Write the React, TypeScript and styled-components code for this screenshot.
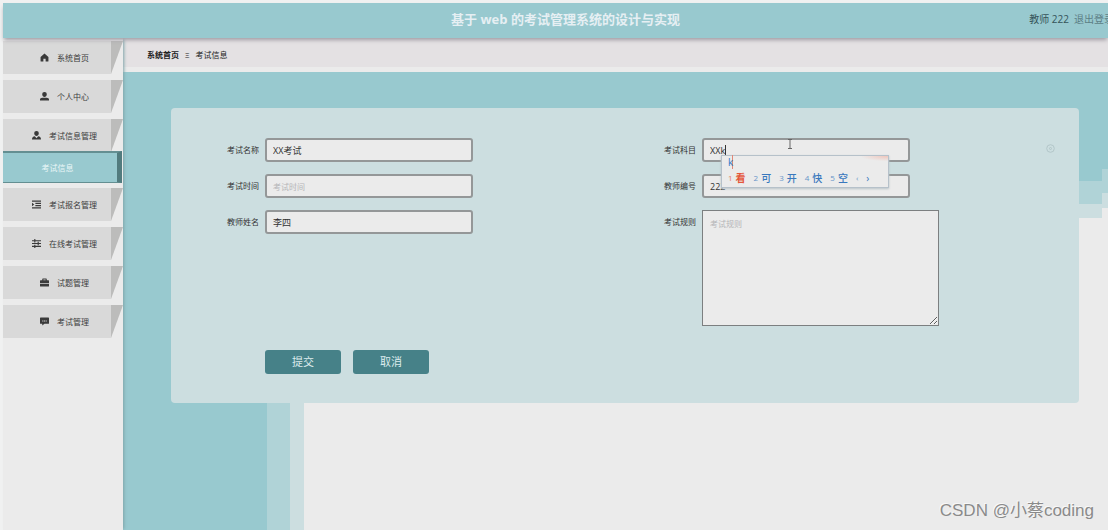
import React from 'react';
import styled, { createGlobalStyle } from 'styled-components';

const teal = '#98c9cf';
const mist = '#b0d3d7';
const pale = '#ccdee0';
const paper = '#ebebeb';

const GlobalStyle = createGlobalStyle`
  * { box-sizing: border-box; }
  body {
    margin: 0;
    background: ${paper};
    color: #333;
    font: 8px/12px "Open Sans", "Noto Sans CJK SC", sans-serif;
    overflow: hidden;
  }
  button, input, textarea { font: inherit; color: inherit; }
  a { color: inherit; text-decoration: none; }
`;

const Page = styled.div`
  position: relative;
  display: flex;
  flex-direction: column;
  min-height: 100vh;
  padding: 3px 0 0 3px;
  background: #f0f1f1;
`;

const Header = styled.header`
  position: relative;
  z-index: 2;
  display: grid;
  grid-template-columns: 1fr auto 1fr;
  align-items: center;
  height: 35px;
  padding: 0 0 4px 20px;
  background: ${teal};
  box-shadow: 0 3px 4px -1px #a09ca4;
`;

const Title = styled.h1`
  grid-column: 2;
  margin: 0;
  font-size: 13px;
  line-height: 20px;
  font-weight: 700;
  color: #e6eff3;
`;

const Account = styled.div`
  display: flex;
  justify-content: flex-end;
  gap: 5px;
  margin-right: -6px;
  font-size: 10px;
  line-height: 16px;
  white-space: nowrap;
  color: #35545a;
  a { color: #5c7e85; }
`;

const Body = styled.div`
  flex: 1;
  display: flex;
  background: ${paper};
`;

const Sidebar = styled.nav`
  position: relative;
  z-index: 1;
  flex: 0 0 120px;
  padding-top: 3px;
  background: ${paper};
  box-shadow: 2px 0 3px -1px #7fa4a8;
`;

const Menu = styled.ul`
  display: flex;
  flex-direction: column;
  gap: 6px;
  margin: 0;
  padding: 0;
  list-style: none;
`;

const MenuLink = styled.a`
  position: relative;
  display: flex;
  align-items: center;
  justify-content: center;
  gap: 8px;
  height: 33px;
  padding-left: 3px;
  background: linear-gradient(to right, #d9d9d9 108px, transparent 108px);
  color: #3c3c3c;

  &::after {
    content: "";
    position: absolute;
    top: 0;
    right: 0;
    width: 12px;
    height: 100%;
    background: #bcbcbb;
    clip-path: polygon(0 0, 100% 0, 0 100%);
  }
`;

const SubLink = styled.a`
  position: relative;
  display: flex;
  align-items: center;
  justify-content: center;
  height: 32px;
  margin: -1px 1px -1px 0;
  padding-right: 5px;
  border: solid #648f92;
  border-width: 2px 5px 1px 0;
  border-right-color: #527b7e;
  background: ${teal};
  color: #eaf7f8;
`;

const Main = styled.main`
  flex: 1;
  display: flex;
  flex-direction: column;
  min-width: 0;
`;

const Crumbs = styled.nav`
  display: flex;
  align-items: center;
  gap: 6px;
  height: 34px;
  padding: 5px 0 0 24px;
  border-bottom: 5px solid ${paper};
  background: #e4e1e3;
  color: #222;
  strong { font-weight: 700; }
`;

const Stage = styled.section`
  flex: 1;
  padding: 36px 29px 36px 48px;
  background:
    linear-gradient(${teal}, ${teal}) 0 0 / 100% 60px no-repeat,
    linear-gradient(to right, ${teal} 144px, ${mist} 144px 167px, ${pale} 167px 181px, transparent 181px),
    linear-gradient(${teal} 97px, ${mist} 97px 121px, ${pale} 121px 136px, ${paper} 136px) 100% 0 / 6px 100% no-repeat,
    linear-gradient(${teal} 109px, ${mist} 109px 132px, ${pale} 132px 146px, ${paper} 146px);
`;

const Card = styled.form`
  position: relative;
  display: grid;
  grid-template-columns: 1fr 1fr;
  padding: 30px 17px 29px;
  border-radius: 4px;
  background: ${pale};
`;

const Column = styled.div`
  display: flex;
  flex-direction: column;
  gap: 12px;
`;

const Field = styled.div`
  position: relative;
  display: flex;
  align-items: flex-start;
  gap: 6px;
  label {
    flex: 0 0 71px;
    line-height: 24px;
    text-align: right;
  }
`;

const TextInput = styled.input`
  width: 208px;
  height: 24px;
  padding: 0 6px;
  border: 2px solid #949798;
  border-radius: 3px;
  outline: 0;
  background: ${paper};
  font-size: 9px;
  &::placeholder { font-size: 8px; color: #b5b5b8; opacity: 1; }
`;

const TextArea = styled.textarea`
  width: 237px;
  height: 116px;
  padding: 7px;
  border: 1px solid #7c7f80;
  outline: 0;
  background: ${paper};
  &::placeholder { color: #b5b5b8; opacity: 1; }
`;

const Actions = styled.div`
  grid-column: 1 / -1;
  display: flex;
  gap: 12px;
  padding: 24px 0 0 77px;
`;

const ActionButton = styled.button`
  width: 76px;
  height: 24px;
  padding: 0;
  border: 0;
  border-radius: 3px;
  background: #468188;
  color: #deecee;
  font-size: 11px;
  line-height: 24px;
`;

const Candidates = styled.div`
  position: absolute;
  z-index: 3;
  top: 17px;
  left: 96px;
  width: 168px;
  height: 33px;
  padding: 0 6px;
  border: 1px solid #b6c1ca;
  background: radial-gradient(ellipse at 100% 0, #efc5bb 0, ${paper} 28px);
  box-shadow: 0 1px 2px #b9c3c8;
  color: #3978bd;
`;

const Typed = styled.div`
  font-size: 10px;
  line-height: 13px;
  color: #2f72c4;
  span { box-shadow: inset -1px 0 #e08878; }
`;

const Choices = styled.ol`
  display: flex;
  gap: 8px;
  margin: 0;
  padding: 0;
  list-style: none;
  font-size: 10px;
  line-height: 18px;
`;

const Choice = styled.li<{ $active?: boolean }>`
  display: flex;
  gap: 3px;
  color: ${p => (p.$active ? '#e4573b' : '#3978bd')};
  font-weight: ${p => (p.$active ? 700 : 500)};
  small { font-size: 8px; font-weight: 400; opacity: .75; }
`;

const Caret = styled.span`
  position: absolute;
  top: 7px;
  left: 100px;
  width: 1px;
  height: 10px;
  background: #333;
`;

const Pointer = styled.svg`
  position: absolute;
  top: 1px;
  left: 162px;
`;

const Target = styled.svg`
  position: absolute;
  top: 36px;
  right: 24px;
`;

const Watermark = styled.div`
  position: absolute;
  z-index: 4;
  right: 14px;
  bottom: 7px;
  font: 17px/24px "Liberation Sans", "Noto Sans CJK SC", sans-serif;
  color: #8a8a8a;
  text-shadow: -1px -1px 0 #f8f8f8;
`;

const icons = {
  home: <path d="M8 1 1 7v7q0 1 1 1h4v-5h4v5h4q1 0 1-1V7Z" />,
  user: <path d="M8 0a4 4 0 0 1 4 4.500C12 7 10 9 8 9S4 7 4 4.500A4 4 0 0 1 8 0ZM0 15v-2q0-3 4-3h8q4 0 4 3v2Z" />,
  manager: <path d="M8 0a4 4 0 0 1 4 4.500C12 7 10 9 8 9S4 7 4 4.500A4 4 0 0 1 8 0ZM0 15q0-5 5-5.500L8 13l3-3.500q5 .5 5 5.500Z" />,
  list: <path d="M0 1h16v2H0ZM6 5h10v2H6ZM6 9h10v2H6ZM0 13h16v2H0ZM0 5l4 3-4 3Z" />,
  sliders: <path d="M0 2h4V0h2v2h10v2H6v2H4V4H0ZM0 7h10V5h2v2h4v2h-4v2h-2V9H0ZM0 12h4v-2h2v2h10v2H6v2H4v-2H0Z" />,
  case: <path d="M4 4V2q0-1 1-1h6q1 0 1 1v2h3q1 0 1 1v4H0V5q0-1 1-1ZM6 4h4V2.500H6ZM0 10h16v4q0 1-1 1H1q-1 0-1-1Z" fillRule="evenodd" />,
  chat: <path d="M1 1h14q1 0 1 1v9q0 1-1 1H8l-4 3v-3H1q-1 0-1-1V2q0-1 1-1ZM4 6v2h2V6Zm3 0v2h2V6Zm3 0v2h2V6Z" fillRule="evenodd" />,
};

function Icon({ name }: { name: keyof typeof icons }) {
  return (
    <svg width="9" height="9" viewBox="0 0 16 16" fill="#3a3a3a" aria-hidden="true">
      {icons[name]}
    </svg>
  );
}

const menu: { icon: keyof typeof icons; text: string; child?: string }[] = [
  { icon: 'home', text: '系统首页' },
  { icon: 'user', text: '个人中心' },
  { icon: 'manager', text: '考试信息管理', child: '考试信息' },
  { icon: 'list', text: '考试报名管理' },
  { icon: 'sliders', text: '在线考试管理' },
  { icon: 'case', text: '试题管理' },
  { icon: 'chat', text: '考试管理' },
];

const choices = ['看', '可', '开', '快', '空'];

export default function App() {
  return (
    <Page lang="zh-CN">
      <GlobalStyle />
      <Header>
        <Title>基于 web 的考试管理系统的设计与实现</Title>
        <Account>
          <span>教师 222</span>
          <a href="#logout">退出登录</a>
        </Account>
      </Header>
      <Body>
        <Sidebar>
          <Menu>
            {menu.map(item => (
              <li key={item.text}>
                <MenuLink href="#menu">
                  <Icon name={item.icon} />
                  {item.text}
                </MenuLink>
                {item.child && <SubLink href="#exams">{item.child}</SubLink>}
              </li>
            ))}
          </Menu>
        </Sidebar>
        <Main>
          <Crumbs>
            <strong>系统首页</strong>
            <span>Ξ</span>
            <span>考试信息</span>
          </Crumbs>
          <Stage>
            <Card>
              <Column>
                <Field>
                  <label htmlFor="name">考试名称</label>
                  <TextInput id="name" defaultValue="XX考试" />
                </Field>
                <Field>
                  <label htmlFor="time">考试时间</label>
                  <TextInput id="time" placeholder="考试时间" />
                </Field>
                <Field>
                  <label htmlFor="teacher">教师姓名</label>
                  <TextInput id="teacher" defaultValue="李四" />
                </Field>
              </Column>
              <Column>
                <Field>
                  <label htmlFor="subject">考试科目</label>
                  <TextInput id="subject" defaultValue="XXk" />
                  <Caret />
                  <Pointer width="6" height="10" viewBox="0 0 6 10" fill="none" stroke="#666">
                    <path d="M1 .5h4M3 .5v9M1 9.500h4" />
                  </Pointer>
                  <Candidates>
                    <Typed><span>k</span></Typed>
                    <Choices>
                      {choices.map((word, i) => (
                        <Choice key={word} $active={i === 0}>
                          <small>{i + 1}</small>
                          {word}
                        </Choice>
                      ))}
                      <Choice><small>‹</small></Choice>
                      <Choice>›</Choice>
                    </Choices>
                  </Candidates>
                </Field>
                <Field>
                  <label htmlFor="number">教师编号</label>
                  <TextInput id="number" defaultValue="222" />
                </Field>
                <Field>
                  <label htmlFor="rules">考试规则</label>
                  <TextArea id="rules" placeholder="考试规则" />
                </Field>
              </Column>
              <Actions>
                <ActionButton type="submit">提交</ActionButton>
                <ActionButton type="button">取消</ActionButton>
              </Actions>
              <Target width="9" height="9" viewBox="0 0 9 9" fill="none" stroke="#b3c6c9">
                <circle cx="4.500" cy="4.500" r="3.800" />
                <circle cx="4.500" cy="4.500" r="1" />
              </Target>
            </Card>
          </Stage>
        </Main>
      </Body>
      <Watermark>CSDN @小蔡coding</Watermark>
    </Page>
  );
}
